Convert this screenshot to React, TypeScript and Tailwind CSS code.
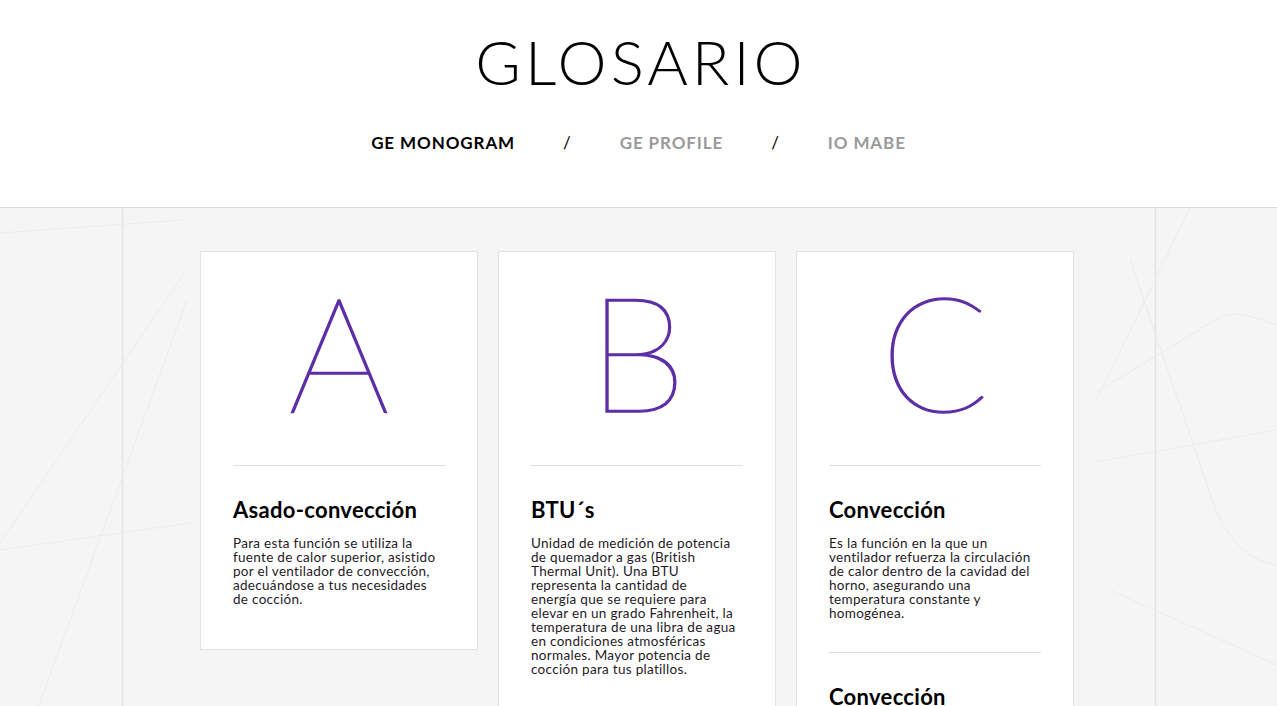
import React from 'react';

const FONT = { fontFamily: 'Lato, "Open Sans", sans-serif' };

type Entry = { title: string; lines: string[] };
type Card = { letter: string; entries: Entry[] };

const CARDS: Card[] = [
  {
    letter: 'A',
    entries: [
      {
        title: 'Asado-convección',
        lines: [
          'Para esta función se utiliza la',
          'fuente de calor superior, asistido',
          'por el ventilador de convección,',
          'adecuándose a tus necesidades',
          'de cocción.',
        ],
      },
    ],
  },
  {
    letter: 'B',
    entries: [
      {
        title: 'BTU´s',
        lines: [
          'Unidad de medición de potencia',
          'de quemador a gas (British',
          'Thermal Unit). Una BTU',
          'representa la cantidad de',
          'energía que se requiere para',
          'elevar en un grado Fahrenheit, la',
          'temperatura de una libra de agua',
          'en condiciones atmosféricas',
          'normales. Mayor potencia de',
          'cocción para tus platillos.',
        ],
      },
    ],
  },
  {
    letter: 'C',
    entries: [
      {
        title: 'Convección',
        lines: [
          'Es la función en la que un',
          'ventilador refuerza la circulación',
          'de calor dentro de la cavidad del',
          'horno, asegurando una',
          'temperatura constante y',
          'homogénea.',
        ],
      },
      {
        title: 'Convección',
        lines: [
          'Es la función en la que un',
          'ventilador refuerza la circulación',
          'de calor dentro de la cavidad del',
          'horno.',
        ],
      },
    ],
  },
];

// faint decorative strokes behind the cards
function BackgroundLines() {
  return (
    <svg
      className="absolute left-0 top-0 w-full h-[520px] pointer-events-none"
      viewBox="0 0 1277 520"
      fill="none"
      stroke="#ececec"
      strokeWidth="1"
    >
      <line x1="122.5" y1="0" x2="122.5" y2="520" stroke="#e4e4e4" strokeWidth="1.5" />
      <line x1="1155.5" y1="0" x2="1155.5" y2="520" stroke="#e4e4e4" strokeWidth="1.5" />
      <line x1="0" y1="25" x2="183" y2="12" />
      <line x1="0" y1="335" x2="185" y2="64" />
      <line x1="0" y1="342" x2="190" y2="315" />
      <line x1="38" y1="500" x2="187" y2="92" />
      <line x1="1190" y1="0" x2="1095" y2="195" />
      <path d="M1130 52 L1215 300 Q1235 350 1277 357" />
      <path d="M1095 185 L1215 112 Q1230 103 1250 108 L1277 117" />
      <line x1="1095" y1="254" x2="1277" y2="222" />
      <line x1="1110" y1="382" x2="1277" y2="457" />
    </svg>
  );
}

function GlossaryCard({ card }: { card: Card }) {
  return (
    <div className="w-[278px] bg-white border border-[#e2e2e2] px-[32px] pb-[43px] self-start">
      <div className="h-[213px] flex items-center justify-center">
        <span
          className="text-[160px] leading-none font-extralight text-[#5d2ea6] [-webkit-text-stroke:1.4px_#5d2ea6] -mt-[18px]"
          style={FONT}
        >
          {card.letter}
        </span>
      </div>
      {card.entries.map((e, i) => (
        <div key={i} className="border-t border-[#dedede] pt-[32px] pb-[32px] last:pb-0">
          <h2 className="text-[22px] leading-[24px] font-bold tracking-[0.3px] text-black" style={FONT}>
            {e.title}
          </h2>
          <p className="mt-[14px] text-[13.5px] leading-[14px] tracking-[0.3px] text-[#1f1a26]" style={FONT}>
            {e.lines.map((l, j) => (
              <span key={j} className="block whitespace-nowrap">
                {l}
              </span>
            ))}
          </p>
        </div>
      ))}
    </div>
  );
}

export default function App() {
  return (
    <div className="min-h-screen bg-[#f5f5f5]" style={FONT}>
      <header className="h-[208px] bg-white border-b border-[#dcdcdc] flex flex-col items-center">
        <h1 className="mt-[28px] ml-[5px] text-[62px] leading-[66px] font-light tracking-[4px] text-black">
          GLOSARIO
        </h1>
        <nav className="mt-[36px] flex items-center gap-[48px] text-[17px] font-bold tracking-[0.9px]">
          <a className="text-black">GE MONOGRAM</a>
          <span className="text-black font-normal">/</span>
          <a className="text-[#9a9a9a]">GE PROFILE</a>
          <span className="text-black font-normal">/</span>
          <a className="text-[#9a9a9a]">IO MABE</a>
        </nav>
      </header>
      <main className="relative overflow-hidden">
        <BackgroundLines />
        <div className="relative flex justify-center gap-[20px] pt-[43px] pr-[3px] pb-[40px]">
          {CARDS.map((c) => (
            <GlossaryCard key={c.letter} card={c} />
          ))}
        </div>
      </main>
    </div>
  );
}
